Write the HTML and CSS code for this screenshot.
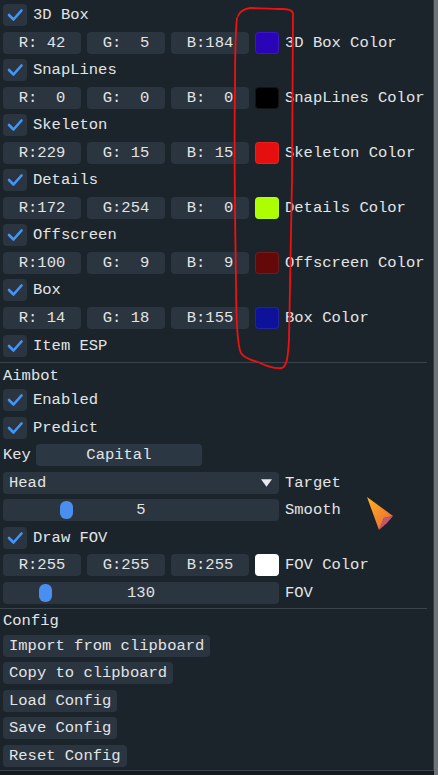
FILE: index.html
```html
<!DOCTYPE html>
<html>
<head>
<meta charset="utf-8">
<link rel="stylesheet" href="styles.css">
</head>
<body>
<div class="win">
  <div class="content">
    <div class="row"><span class="chk"><svg viewBox="0 0 24 22"><polyline points="6,11 10.5,15.5 18.5,6.5"/></svg></span><span class="lbl">3D Box</span></div>
    <div class="row"><span class="field">R: 42</span><span class="field">G:  5</span><span class="field">B:184</span><span class="swatch" style="background:#2a05b8"></span><span class="lbl">3D Box Color</span></div>
    <div class="row"><span class="chk"><svg viewBox="0 0 24 22"><polyline points="6,11 10.5,15.5 18.5,6.5"/></svg></span><span class="lbl">SnapLines</span></div>
    <div class="row"><span class="field">R:  0</span><span class="field">G:  0</span><span class="field">B:  0</span><span class="swatch" style="background:#000000"></span><span class="lbl">SnapLines Color</span></div>
    <div class="row"><span class="chk"><svg viewBox="0 0 24 22"><polyline points="6,11 10.5,15.5 18.5,6.5"/></svg></span><span class="lbl">Skeleton</span></div>
    <div class="row"><span class="field">R:229</span><span class="field">G: 15</span><span class="field">B: 15</span><span class="swatch" style="background:#e50f0f"></span><span class="lbl">Skeleton Color</span></div>
    <div class="row"><span class="chk"><svg viewBox="0 0 24 22"><polyline points="6,11 10.5,15.5 18.5,6.5"/></svg></span><span class="lbl">Details</span></div>
    <div class="row"><span class="field">R:172</span><span class="field">G:254</span><span class="field">B:  0</span><span class="swatch" style="background:#acfe00"></span><span class="lbl">Details Color</span></div>
    <div class="row"><span class="chk"><svg viewBox="0 0 24 22"><polyline points="6,11 10.5,15.5 18.5,6.5"/></svg></span><span class="lbl">Offscreen</span></div>
    <div class="row"><span class="field">R:100</span><span class="field">G:  9</span><span class="field">B:  9</span><span class="swatch" style="background:#640909"></span><span class="lbl">Offscreen Color</span></div>
    <div class="row"><span class="chk"><svg viewBox="0 0 24 22"><polyline points="6,11 10.5,15.5 18.5,6.5"/></svg></span><span class="lbl">Box</span></div>
    <div class="row"><span class="field">R: 14</span><span class="field">G: 18</span><span class="field">B:155</span><span class="swatch" style="background:#0e129b"></span><span class="lbl">Box Color</span></div>
    <div class="row"><span class="chk"><svg viewBox="0 0 24 22"><polyline points="6,11 10.5,15.5 18.5,6.5"/></svg></span><span class="lbl">Item ESP</span></div>

    <div class="sep"></div>
    <div class="text">Aimbot</div>
    <div class="row"><span class="chk"><svg viewBox="0 0 24 22"><polyline points="6,11 10.5,15.5 18.5,6.5"/></svg></span><span class="lbl">Enabled</span></div>
    <div class="row"><span class="chk"><svg viewBox="0 0 24 22"><polyline points="6,11 10.5,15.5 18.5,6.5"/></svg></span><span class="lbl">Predict</span></div>
    <div class="row key-row"><span class="lbl">Key</span><span class="keybtn">Capital</span></div>
    <div class="row"><span class="combo"><span class="combo-val">Head</span><svg class="arrow" viewBox="0 0 12 8"><polygon points="0,0 12,0 6,8"/></svg></span><span class="lbl">Target</span></div>
    <div class="row"><span class="slider"><span class="grab" style="left:57px"></span><span class="sval">5</span></span><span class="lbl">Smooth</span></div>
    <div class="row"><span class="chk"><svg viewBox="0 0 24 22"><polyline points="6,11 10.5,15.5 18.5,6.5"/></svg></span><span class="lbl">Draw FOV</span></div>
    <div class="row"><span class="field">R:255</span><span class="field">G:255</span><span class="field">B:255</span><span class="swatch" style="background:#ffffff"></span><span class="lbl">FOV Color</span></div>
    <div class="row"><span class="slider"><span class="grab" style="left:36px"></span><span class="sval">130</span></span><span class="lbl">FOV</span></div>

    <div class="sep sep-tight"></div>
    <div class="text">Config</div>
    <div class="row"><span class="btn">Import from clipboard</span></div>
    <div class="row"><span class="btn">Copy to clipboard</span></div>
    <div class="row"><span class="btn">Load Config</span></div>
    <div class="row"><span class="btn">Save Config</span></div>
    <div class="row"><span class="btn">Reset Config</span></div>
  </div>

  <svg class="scribble" viewBox="0 0 438 775" width="438" height="775">
    <path d="M238,16 C240,11 244,9 250,8 C262,8 274,9 282,9 C288,9 292,10 293,13 C293,60 292,120 292,180 C291,240 290,300 289,340 C288,356 287,366 282,368 C275,369 266,366 258,362 C250,360 244,358 241,353 C237,345 236,320 236,280 C235,220 234,150 235,90 C235,60 235,35 237,18"/>
  </svg>
  <svg class="cursor" viewBox="0 0 30 36" width="30" height="36">
    <defs>
      <linearGradient id="cg" x1="0" y1="0" x2="1" y2="1">
        <stop offset="0" stop-color="#ffb520"/>
        <stop offset="1" stop-color="#e8603a"/>
      </linearGradient>
    </defs>
    <polygon points="1,1 27,20 18,22 13,34" fill="url(#cg)"/>
    <polygon points="13,34 18,22 27,20 21,27" fill="#e2607a" opacity="0.85"/>
  </svg>
</div>
</body>
</html>
```

FILE: styles.css
```css
html, body {
  margin: 0;
  padding: 0;
}
body {
  width: 438px;
  height: 775px;
  background: #6c7277;
  overflow: hidden;
  font-family: "Liberation Mono", "DejaVu Sans Mono", monospace;
  font-size: 15.5px;
  color: #e2e4e6;
}
.win {
  position: relative;
  width: 433px;
  height: 770px;
  background: #1c242b;
  border-right: 1px solid #343d45;
  border-bottom: 1px solid #3a434b;
  box-shadow: 0 4px 0 #151a1f;
}
.content {
  display: flex;
  flex-direction: column;
  gap: 5.55px;
  padding: 4px 0 0 3px;
}
.row {
  display: flex;
  align-items: center;
  gap: 6px;
  height: 22px;
}
.lbl {
  white-space: pre;
  line-height: 22px;
}
.chk {
  width: 24px;
  height: 22px;
  border-radius: 4px;
  background: #2b353f;
  display: flex;
}
.chk svg {
  width: 24px;
  height: 22px;
}
.chk polyline {
  fill: none;
  stroke: #4296fa;
  stroke-width: 2.6;
  stroke-linecap: round;
  stroke-linejoin: round;
}
.field {
  width: 78px;
  height: 22px;
  border-radius: 4px;
  background: #2b353f;
  white-space: pre;
  text-align: center;
  line-height: 22px;
}
.swatch {
  width: 24px;
  height: 22px;
  border-radius: 4px;
  box-shadow: inset 0 0 0 1px rgba(255,255,255,0.08);
}
.sep {
  height: 1px;
  background: #3a444d;
  width: 427px;
  margin-left: -3px;
}
.sep-tight {
  margin-top: -2px;
}
.text {
  height: 15px;
  line-height: 15px;
  white-space: pre;
}
.keybtn {
  width: 166px;
  height: 22px;
  border-radius: 4px;
  background: #2b3844;
  text-align: center;
  line-height: 22px;
  margin-left: -1px;
}
.combo {
  width: 276px;
  height: 22px;
  border-radius: 4px;
  background: #2b353f;
  display: flex;
  align-items: center;
  justify-content: space-between;
  padding: 0 6px 0 6px;
  box-sizing: border-box;
}
.combo-val {
  line-height: 22px;
}
.arrow {
  width: 11px;
  height: 8px;
  margin-right: 1px;
}
.arrow polygon {
  fill: #e8eaec;
}
.slider {
  position: relative;
  width: 276px;
  height: 22px;
  border-radius: 4px;
  background: #2b353f;
  text-align: center;
  line-height: 22px;
}
.grab {
  position: absolute;
  top: 2px;
  width: 13px;
  height: 18px;
  border-radius: 6px;
  background: #4a8ef0;
}
.sval {
  position: relative;
}
.btn {
  height: 22px;
  border-radius: 4px;
  background: #2b353f;
  padding: 0 6px;
  line-height: 22px;
  white-space: pre;
}
.scribble {
  position: absolute;
  left: 0;
  top: 0;
  pointer-events: none;
}
.scribble path {
  fill: none;
  stroke: #f01010;
  stroke-width: 1.8;
  stroke-linecap: round;
  stroke-linejoin: round;
}
.cursor {
  position: absolute;
  left: 366px;
  top: 496px;
}
```
